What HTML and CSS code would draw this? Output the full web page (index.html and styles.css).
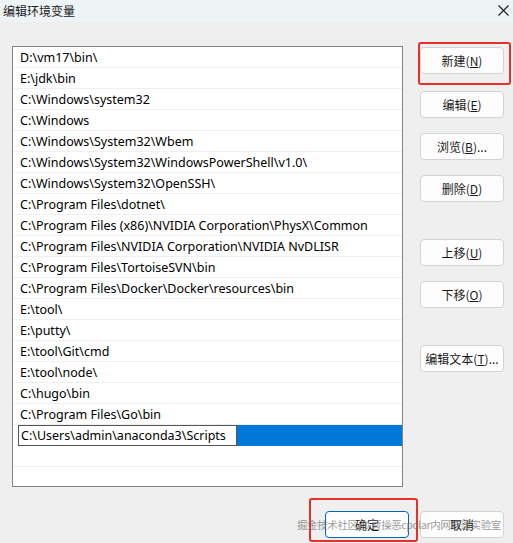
FILE: index.html
```html
<!DOCTYPE html>
<html lang="zh-CN">
<head>
    <meta charset="UTF-8">
    <title>编辑环境变量</title>
    <link rel="stylesheet" href="styles.css">
</head>
<body>
<div class="dlg">
    <div class="titlebar">
        <span class="title">编辑环境变量</span>
        <svg class="close" width="11" height="11" viewBox="0 0 11 11">
            <path d="M0.5 0.5L10.5 10.5M10.5 0.5L0.5 10.5" stroke="#1a1a1a" stroke-width="1.1"/>
        </svg>
    </div>
    <div class="main">
        <ul class="paths">
            <li>D:\vm17\bin\</li>
            <li>E:\jdk\bin</li>
            <li>C:\Windows\system32</li>
            <li>C:\Windows</li>
            <li>C:\Windows\System32\Wbem</li>
            <li>C:\Windows\System32\WindowsPowerShell\v1.0\</li>
            <li>C:\Windows\System32\OpenSSH\</li>
            <li>C:\Program Files\dotnet\</li>
            <li>C:\Program Files (x86)\NVIDIA Corporation\PhysX\Common</li>
            <li>C:\Program Files\NVIDIA Corporation\NVIDIA NvDLISR</li>
            <li>C:\Program Files\TortoiseSVN\bin</li>
            <li>C:\Program Files\Docker\Docker\resources\bin</li>
            <li>E:\tool\</li>
            <li>E:\putty\</li>
            <li>E:\tool\Git\cmd</li>
            <li>E:\tool\node\</li>
            <li>C:\hugo\bin</li>
            <li>C:\Program Files\Go\bin</li>
            <li class="sel"><span class="edit">C:\Users\admin\anaconda3\Scripts</span><span class="fill"></span></li>
            <li></li>
        </ul>
        <div class="side">
            <div class="btn">新建(<u>N</u>)</div>
            <div class="btn gap2">编辑(<u>E</u>)</div>
            <div class="btn">浏览(<u>B</u>)...</div>
            <div class="btn">删除(<u>D</u>)</div>
            <div class="btn far">上移(<u>U</u>)</div>
            <div class="btn">下移(<u>O</u>)</div>
            <div class="btn far">编辑文本(<u>T</u>)...</div>
        </div>
    </div>
    <div class="foot">
        <div class="btn ok">确定</div>
        <div class="btn">取消</div>
    </div>
</div>
<div class="mark mark-new"></div>
<div class="mark mark-ok"></div>
<div class="wm">掘金技术社区 @ 曹操恶cpolar内网穿透实验室</div>
</body>
</html>
```

FILE: styles.css
```css
*{
    margin:0;
    padding:0;
    list-style: none;
    box-sizing: border-box;
}
html,body{
    width: 513px;
    height: 543px;
    overflow: hidden;
}
body{
    background: #efefef;
    font-family: "Noto Sans", "Noto Sans CJK SC", sans-serif;
    font-size: 12px;
    color: #000;
    position: relative;
}
.titlebar{
    height: 22px;
    background: #eef3f6;
    display: flex;
    align-items: center;
    justify-content: space-between;
    padding: 0 4px 2px 3px;
}
.title{
    font-family: "Noto Sans CJK SC", sans-serif;
    font-size: 12px;
    color: #1a1a1a;
}
.main{
    display: flex;
    padding: 24px 0 0 12px;
}
.paths{
    width: 391px;
    height: 441px;
    border: 1px solid #838383;
    background: #fff;
    font-size: 12.5px;
}
.paths li{
    height: 21px;
    line-height: 22px;
    padding-left: 7px;
    border-bottom: 1px solid #f0f0f0;
    white-space: nowrap;
}
.paths li.sel{
    display: flex;
    padding-left: 5px;
    border-bottom-color: #fff;
}
.sel .edit{
    width: 219px;
    height: 21px;
    border: 1px solid #555;
    padding-left: 2px;
    line-height: 20px;
    background: #fff;
}
.sel .fill{
    flex: 1;
    height: 21px;
    background: #0078d7;
}
.side{
    width: 84px;
    margin-left: 17px;
    padding-top: 1px;
    display: flex;
    flex-direction: column;
    gap: 15px;
}
.btn{
    width: 84px;
    height: 27px;
    background: #fdfdfd;
    border: 1px solid #d3d3d3;
    border-radius: 4px;
    text-align: center;
    line-height: 26px;
    font-family: "Noto Sans CJK SC", sans-serif;
    font-size: 12px;
    color: #1a1a1a;
}
.btn u{
    text-underline-offset: 1px;
}
.side .gap2{
    margin-top: 2px;
}
.side .far{
    margin-top: 22px;
}
.foot{
    display: flex;
    justify-content: flex-end;
    gap: 11px;
    padding: 24px 9px 0 0;
}
.foot .ok{
    border-color: #0067c0;
}
/* red call-out frames */
.mark{
    position: absolute;
    border: 2px solid #e8302a;
    border-radius: 3px;
}
.mark-new{
    left: 418px;
    top: 42px;
    width: 93px;
    height: 43px;
}
.mark-ok{
    left: 309px;
    top: 498px;
    width: 109px;
    height: 44px;
}
.wm{
    position: absolute;
    left: 297px;
    top: 517px;
    font-family: "Noto Sans CJK SC", sans-serif;
    font-size: 10.5px;
    color: rgba(110,110,110,0.7);
    white-space: nowrap;
    letter-spacing: -0.4px;
}
```
